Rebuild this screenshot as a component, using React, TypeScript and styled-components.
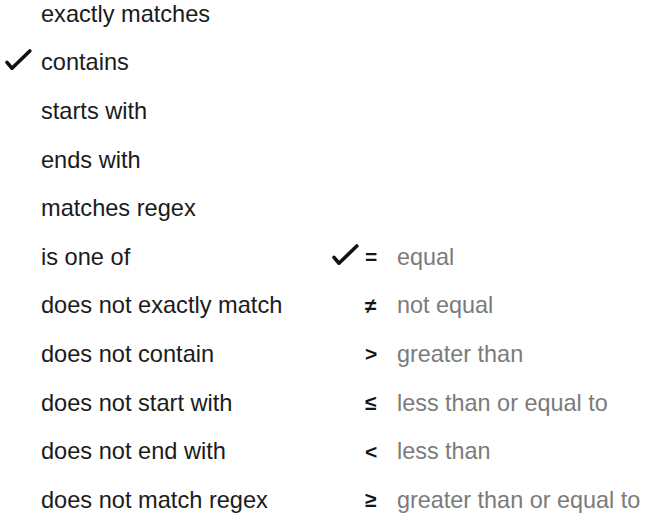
import React from "react";
import styled, { createGlobalStyle } from "styled-components";

const Global = createGlobalStyle`
  html, body { margin: 0; padding: 0; background: #ffffff; }
  body { font-family: "Liberation Sans", Arial, sans-serif; overflow: hidden; }
`;

const ROW = 48.6;

const Page = styled.div`
  display: flex;
  align-items: flex-start;
  width: 649px;
  height: 523px;
  overflow: hidden;
`;

const Columns = styled.div`
  display: flex;
  margin-top: -10px;
`;

const MatchList = styled.ul`
  list-style: none;
  margin: 0;
  padding: 0;
  width: 330px;
  display: flex;
  flex-direction: column;
`;

const OperatorList = styled.ul<{ $offsetRows: number }>`
  list-style: none;
  margin: 0;
  padding: ${(p) => p.$offsetRows * ROW}px 0 0 0;
  display: flex;
  flex-direction: column;
`;

const Row = styled.li`
  height: ${ROW}px;
  display: flex;
  align-items: center;
  white-space: nowrap;
`;

const CheckCell = styled.span<{ $w: number; $dx: number }>`
  width: ${(p) => p.$w}px;
  flex: none;
  display: flex;
  align-items: center;
  padding-left: ${(p) => p.$dx}px;
  box-sizing: border-box;
  height: 100%;
`;

const MatchLabel = styled.span`
  font-size: 23.6px;
  color: #1b1b1b;
`;

const Symbol = styled.span`
  width: 32px;
  flex: none;
  font-size: 21px;
  font-weight: bold;
  color: #151515;
  box-sizing: border-box;
`;

const OpLabel = styled.span`
  font-size: 23.4px;
  color: #7b7b7b;
`;

const Check = ({ dy = 0 }: { dy?: number }) => (
  <svg width="28" height="24" viewBox="0 0 28 24" style={{ marginTop: dy }}>
    <path
      d="M3 13.4 L8 19.2 L25.8 2"
      fill="none"
      stroke="#111"
      strokeWidth="3.6"
      strokeLinecap="round"
      strokeLinejoin="round"
    />
  </svg>
);

const matches = [
  "exactly matches",
  "contains",
  "starts with",
  "ends with",
  "matches regex",
  "is one of",
  "does not exactly match",
  "does not contain",
  "does not start with",
  "does not end with",
  "does not match regex",
];

const operators: { sym: string; label: string }[] = [
  { sym: "=", label: "equal" },
  { sym: "≠", label: "not equal" },
  { sym: ">", label: "greater than" },
  { sym: "≤", label: "less than or equal to" },
  { sym: "<", label: "less than" },
  { sym: "≥", label: "greater than or equal to" },
];

export default function App() {
  return (
    <Page>
      <Global />
      <Columns>
        <MatchList>
          {matches.map((m, i) => (
            <Row key={m}>
              <CheckCell $w={41} $dx={4}>
                {i === 1 && <Check dy={-4} />}
              </CheckCell>
              <MatchLabel>{m}</MatchLabel>
            </Row>
          ))}
        </MatchList>
        <OperatorList $offsetRows={5}>
          {operators.map((o, i) => (
            <Row key={o.label}>
              <CheckCell $w={35} $dx={1}>
                {i === 0 && <Check dy={-2} />}
              </CheckCell>
              <Symbol>{o.sym}</Symbol>
              <OpLabel>{o.label}</OpLabel>
            </Row>
          ))}
        </OperatorList>
      </Columns>
    </Page>
  );
}
